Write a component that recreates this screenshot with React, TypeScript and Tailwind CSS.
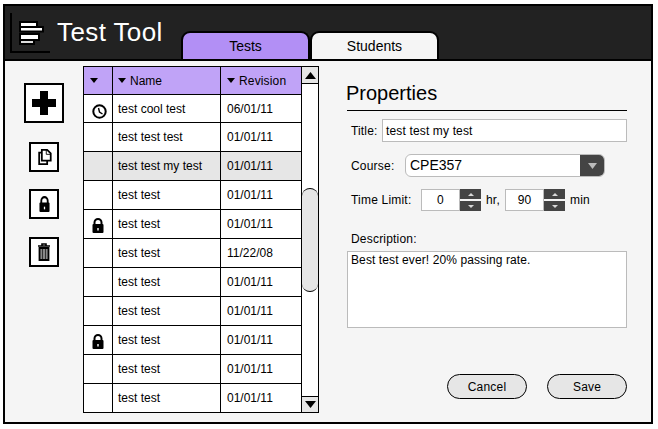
import React from 'react'

const font = { fontFamily: '"Liberation Sans", Arial, sans-serif' }

type Row = { name: string; rev: string; icon?: 'clock' | 'lock'; selected?: boolean }

const rows: Row[] = [
  { name: 'test cool test', rev: '06/01/11', icon: 'clock' },
  { name: 'test test test', rev: '01/01/11' },
  { name: 'test test my test', rev: '01/01/11', selected: true },
  { name: 'test test', rev: '01/01/11' },
  { name: 'test test', rev: '01/01/11', icon: 'lock' },
  { name: 'test test', rev: '11/22/08' },
  { name: 'test test', rev: '01/01/11' },
  { name: 'test test', rev: '01/01/11' },
  { name: 'test test', rev: '01/01/11', icon: 'lock' },
  { name: 'test test', rev: '01/01/11' },
  { name: 'test test', rev: '01/01/11' },
]

const Caret = ({ up = false, color = '#000', w = 8, h = 5 }: { up?: boolean; color?: string; w?: number; h?: number }) => (
  <svg width={w} height={h} viewBox="0 0 10 6" className="shrink-0" preserveAspectRatio="none">
    <path d={up ? 'M0 6 L5 0 L10 6 Z' : 'M0 0 L10 0 L5 6 Z'} fill={color} />
  </svg>
)

const LockIcon = ({ w = 12, h = 15 }: { w?: number; h?: number }) => (
  <svg width={w} height={h} viewBox="0 0 12 15" preserveAspectRatio="none">
    <path d="M2.5 7 V4.5 a3.5 3.5 0 0 1 7 0 V7" fill="none" stroke="#000" strokeWidth="2" />
    <rect x="0.5" y="6" width="11" height="9" rx="1" fill="#000" />
    <rect x="5.3" y="10" width="1.4" height="2.5" fill="#fff" />
  </svg>
)

const ClockIcon = () => (
  <svg width="15" height="15" viewBox="0 0 15 15" className="ml-[2px] mt-[2px]">
    <circle cx="7.5" cy="7.5" r="6.2" fill="#fff" stroke="#000" strokeWidth="2" />
    <path d="M6.5 4 L7.5 8 L10.5 10" fill="none" stroke="#000" strokeWidth="1.4" />
  </svg>
)

const Spinner = () => (
  <div className="flex h-[22px] w-[21px] flex-col justify-between">
    <div className="flex h-[10px] items-center justify-center bg-[#444444]">
      <Caret up color="#d8d8d8" w={6} h={3} />
    </div>
    <div className="flex h-[10px] items-center justify-center bg-[#444444]">
      <Caret color="#d8d8d8" w={6} h={3} />
    </div>
  </div>
)

const ToolButton = ({ children }: { children: React.ReactNode }) => (
  <div className="flex h-[30px] w-[30px] items-center justify-center border-2 border-black bg-white">{children}</div>
)

export default function App() {
  return (
    <div className="h-[429px] w-[658px] overflow-hidden bg-white pl-[3px] pt-1 text-black" style={font}>
      <div className="flex h-[420px] w-[650px] flex-col border-2 border-black bg-[#f5f5f5]">
        {/* header */}
        <div className="flex h-[55px] shrink-0 items-end border-b-2 border-black bg-[#222222]">
          <div className="relative flex h-[53px] w-[176px] shrink-0 items-center">
            <div className="absolute left-[5px] top-[7px] h-[40px] w-[40px] border-b-2 border-l-2 border-black" />
            <svg width="26" height="24" viewBox="0 0 26 24" className="ml-[14px] shrink-0">
              <rect x="0" y="0" width="19" height="7" fill="#000" />
              <rect x="0" y="5" width="25" height="6.5" fill="#000" />
              <rect x="0" y="12" width="21" height="8" fill="#000" />
              <rect x="0" y="18" width="16" height="6" fill="#000" />
              <rect x="2" y="2" width="15" height="3" fill="#fff" />
              <rect x="2" y="7" width="21" height="2.5" fill="#fff" />
              <rect x="2" y="14" width="17" height="4" fill="#fff" />
              <rect x="2" y="20" width="12" height="2" fill="#ddd" />
            </svg>
            <span className="ml-[12px] mt-[-2px] whitespace-nowrap text-[26px] leading-none tracking-[0.4px] text-white">Test Tool</span>
          </div>
          <div className="flex h-[28px] w-[129px] items-center justify-center rounded-t-[9px] border-x-2 border-t-2 border-black bg-[#b28ff5] text-[14px]">Tests</div>
          <div className="flex h-[28px] w-[129px] items-center justify-center rounded-t-[9px] border-x-2 border-t-2 border-black bg-[#f5f5f5] text-[14px]">Students</div>
        </div>

        {/* body */}
        <div className="flex min-h-0 flex-1">
          <div className="flex w-[78px] shrink-0 flex-col items-center pt-[22px]">
            <div className="flex h-[40px] w-[40px] items-center justify-center border-2 border-black bg-white">
              <svg width="24" height="24" viewBox="0 0 24 24">
                <path d="M8 0 H16 V8 H24 V16 H16 V24 H8 V16 H0 V8 H8 Z" fill="#000" />
              </svg>
            </div>
            <div className="mt-[19px] flex flex-col gap-[17px]">
              <ToolButton>
                <svg width="15" height="16" viewBox="0 0 16 18">
                  <path d="M5 1 H11 L15 5 V13 H5 Z" fill="#fff" stroke="#000" strokeWidth="2" />
                  <path d="M5 4 H2 V17 H11 V13" fill="none" stroke="#000" strokeWidth="2" />
                  <path d="M10 1 V6 H15" fill="none" stroke="#000" strokeWidth="1" />
                </svg>
              </ToolButton>
              <ToolButton>
                <LockIcon w={11} h={16} />
              </ToolButton>
              <div className="mt-px">
                <ToolButton>
                  <svg width="14" height="18" viewBox="0 0 14 18">
                    <path d="M1 3 H13 M5 3 V1 H9 V3" fill="none" stroke="#000" strokeWidth="1.6" />
                    <path d="M2.5 5 H11.5 V17 H2.5 Z" fill="#888" stroke="#000" strokeWidth="1.8" />
                    <path d="M5.5 6 V16 M8.5 6 V16" stroke="#333" strokeWidth="1" />
                  </svg>
                </ToolButton>
              </div>
            </div>
          </div>

          {/* table */}
          <div className="mt-[5px] flex h-[347px] w-[236px] shrink-0 border border-black bg-white text-[12px]">
            <div className="flex w-[218px] shrink-0 flex-col border-r border-black">
              <div className="flex h-[28px] shrink-0 border-b border-black bg-[#c0a3f7]">
                <div className="flex w-[29px] shrink-0 items-center border-r border-black pl-[6px]">
                  <Caret />
                </div>
                <div className="flex w-[108px] shrink-0 items-center gap-[4px] border-r border-black pl-[5px]">
                  <Caret />
                  <span>Name</span>
                </div>
                <div className="flex flex-1 items-center gap-[4px] pl-[6px]">
                  <Caret />
                  <span className="tracking-[0.15px]">Revision</span>
                </div>
              </div>
              {rows.map((r, i) => (
                <div
                  key={i}
                  className={`flex shrink-0 border-b border-black last:border-b-0 ${i === 0 || i === rows.length - 1 ? 'h-[28px]' : 'h-[29px]'} ${r.selected ? 'bg-[#e6e6e6]' : 'bg-white'}`}
                >
                  <div className="flex w-[29px] shrink-0 items-center justify-center border-r border-black pt-[3px]">
                    {r.icon === 'clock' && <ClockIcon />}
                    {r.icon === 'lock' && <LockIcon />}
                  </div>
                  <div className="flex w-[108px] shrink-0 items-center whitespace-nowrap border-r border-black pl-[5px]">{r.name}</div>
                  <div className="flex flex-1 items-center pl-[6px]">{r.rev}</div>
                </div>
              ))}
            </div>
            {/* scrollbar */}
            <div className="flex flex-1 flex-col">
              <div className="flex h-[17px] items-center justify-center border-b border-black bg-[#e6e6e6]">
                <Caret up w={11} h={7} />
              </div>
              <div className="mt-[104px] h-[104px] rounded-[10px] border-y border-black bg-[#e6e6e6]" />
              <div className="flex-1" />
              <div className="flex h-[16px] items-center justify-center border-t border-black bg-[#e6e6e6]">
                <Caret w={11} h={7} />
              </div>
            </div>
          </div>

          {/* properties */}
          <div className="ml-[28px] flex w-[280px] shrink-0 flex-col">
            <div className="mt-[20px] h-[30px] border-b border-black pb-[3px] text-[20px] font-medium leading-[24px]">
              <span className="ml-[-1px]">Properties</span>
            </div>
            <div className="mt-[8px] flex h-[23px] items-center text-[12px] tracking-[0.15px]">
              <span className="ml-[4px] w-[31px]">Title:</span>
              <div className="flex h-[23px] flex-1 items-center border border-[#bbbbbb] bg-white pl-[3px]">test test my test</div>
            </div>
            <div className="mt-[12px] flex h-[23px] items-center text-[12px] tracking-[0.2px]">
              <span className="ml-[4px] w-[54px]">Course:</span>
              <div className="flex h-[23px] w-[200px] overflow-hidden rounded-[6px] border border-[#bbbbbb] bg-white">
                <span className="flex flex-1 items-center pl-[4px] text-[14px] tracking-normal">CPE357</span>
                <div className="flex w-[24px] items-center justify-center bg-[#444444]">
                  <Caret color="#bbbbbb" w={9} h={6} />
                </div>
              </div>
            </div>
            <div className="mt-[12px] flex h-[22px] items-center text-[12px] tracking-[0.2px]">
              <span className="ml-[4px] w-[70px]">Time Limit:</span>
              <div className="flex h-[22px] w-[39px] items-center justify-center border border-[#bbbbbb] bg-white">0</div>
              <Spinner />
              <span className="ml-[5px] w-[19px]">hr,</span>
              <div className="flex h-[22px] w-[39px] items-center justify-center border border-[#bbbbbb] bg-white">90</div>
              <Spinner />
              <span className="ml-[5px]">min</span>
            </div>
            <div className="ml-[4px] mt-[21px] text-[12px] leading-[14px] tracking-[0.2px]">Description:</div>
            <div className="mt-[5px] h-[77px] border border-[#bbbbbb] bg-white px-[3px] pt-[1px] text-[12px] leading-[14px] tracking-[0.1px]">
              Best test ever! 20% passing rate.
            </div>
            <div className="mt-[46px] flex justify-end gap-[20px] text-[12px] tracking-[0.2px]">
              <div className="flex h-[25px] w-[80px] items-center justify-center rounded-full border border-black bg-[#e6e6e6]">Cancel</div>
              <div className="flex h-[25px] w-[80px] items-center justify-center rounded-full border border-black bg-[#e6e6e6]">Save</div>
            </div>
          </div>
        </div>
      </div>
    </div>
  )
}
